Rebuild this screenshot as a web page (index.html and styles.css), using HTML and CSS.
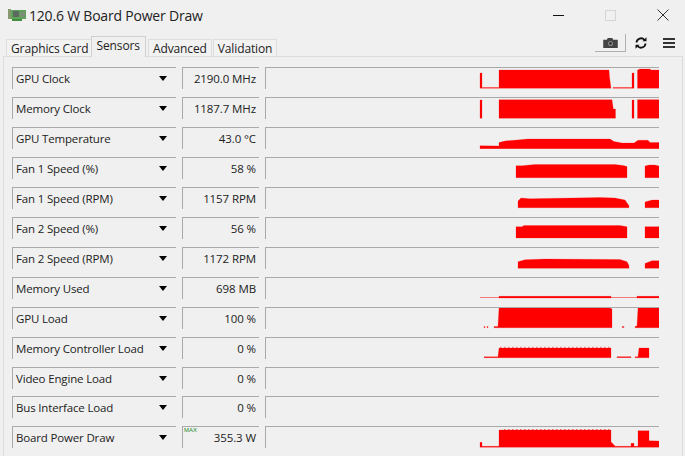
FILE: index.html
```html
<!DOCTYPE html>
<html lang="en">
<head>
<meta charset="utf-8">
<title>120.6 W Board Power Draw</title>
<link rel="stylesheet" href="styles.css">
</head>
<body>
<div class="window">
  <header class="titlebar">
    <svg class="appicon" width="18" height="14" viewBox="0 0 18 14"><rect x="0" y="1" width="3" height="10" fill="#8a9a70"/><rect x="3" y="2" width="15" height="9" fill="#5fa35a"/><rect x="4" y="11" width="10" height="2" fill="#3f8f3f"/><rect x="5" y="3" width="6" height="6" fill="#5b6b60"/><rect x="12" y="4" width="5" height="5" fill="#7b8f78"/></svg>
    <h1 class="title">120.6 W Board Power Draw</h1>
    <div class="caption">
      <span class="cap-min"></span>
      <span class="cap-max"></span>
      <svg class="cap-close" width="12" height="12" viewBox="0 0 12 12"><path d="M.5.5l11 11M11.500.5l-11 11" stroke="#333" stroke-width="1" fill="none"/></svg>
    </div>
  </header>
  <nav class="tabbar">
    <span class="tab">Graphics Card</span>
    <span class="tab active">Sensors</span>
    <span class="tab">Advanced</span>
    <span class="tab">Validation</span>
    <div class="tools">
      <span class="camera"><svg width="15" height="10" viewBox="0 0 16 11"><path d="M0 2h4l1-2h5l1 2h5v9H0z" fill="#444"/><circle cx="8" cy="6" r="2.800" fill="#888"/><circle cx="8" cy="6" r="1.500" fill="#333"/></svg></span>
      <svg class="refresh" width="12" height="12" viewBox="0 0 12 12"><path d="M1.500 5.500A4.500 4.500 0 0 1 9.500 3M10.500 6.500A4.500 4.500 0 0 1 2.500 9" fill="none" stroke="#111" stroke-width="1.800"/><path d="M7.500 4.200h4v-4zM4.500 7.800h-4v4z" fill="#111"/></svg>
      <span class="menu"><i></i><i></i><i></i></span>
    </div>
  </nav>
  <main class="panel">
    <div class="row"><div class="label"><span>GPU Clock</span><b class="arrow"></b></div><div class="value">2190.0 MHz</div>
      <svg class="graph" viewBox="266 1 393 21"><polygon points="480,6 482,6 482,20.500 499,20.500 499,3 609,3 609.500,10 611,21.300 480,21.300"/><polygon points="613,20.500 632,20.500 632,6 634,6 634,21.300 613,21.300"/><polygon points="637.500,3 640,2 650,2 651,3 659,3 659,21.300 637.500,21.300"/></svg></div>
    <div class="row"><div class="label"><span>Memory Clock</span><b class="arrow"></b></div><div class="value">1187.7 MHz</div>
      <svg class="graph" viewBox="266 1 393 21"><polygon points="480,3 482,3 482,21.300 480,21.300"/><polygon points="499,2.700 612,2.700 613.300,12 615.500,12 615.500,21.300 499,21.300"/><polygon points="632,3 634,3 634,21.300 632,21.300"/><polygon points="637.500,2.700 659,2.700 659,21.300 637.500,21.300"/></svg></div>
    <div class="row"><div class="label"><span>GPU Temperature</span><b class="arrow"></b></div><div class="value">43.0 °C</div>
      <svg class="graph" viewBox="266 1 393 21"><polygon points="480,18.700 499,19 499,15.500 505,14 517,13 528,12 610,12 614,14.500 622,16 627,16 634,16 638,13.300 648,13.300 650,15.500 659,15.500 659,21.700 480,21.700"/></svg></div>
    <div class="row"><div class="label"><span>Fan 1 Speed (%)</span><b class="arrow"></b></div><div class="value">58 %</div>
      <svg class="graph" viewBox="266 1 393 21"><polygon points="516,8.700 522,8.700 535,7.500 615,7.500 623,8.500 627,9.500 627,20.700 516,20.700"/><polygon points="645,9 649,8 655,8 659,9 659,20.700 645,20.700"/></svg></div>
    <div class="row"><div class="label"><span>Fan 1 Speed (RPM)</span><b class="arrow"></b></div><div class="value">1157 RPM</div>
      <svg class="graph" viewBox="266 1 393 21"><polygon points="518,14 521,11 530,11.700 600,10.500 615,11 625,13 629,18.700 629,20.700 518,20.700"/><polygon points="645,15 652,13 659,13 659,20.700 645,20.700"/></svg></div>
    <div class="row"><div class="label"><span>Fan 2 Speed (%)</span><b class="arrow"></b></div><div class="value">56 %</div>
      <svg class="graph" viewBox="266 1 393 21"><polygon points="516,9.700 522,9.700 524,8.500 620,8.500 627,9.700 627,21 516,21"/><polygon points="645,9.700 659,9.700 659,21 645,21"/></svg></div>
    <div class="row"><div class="label"><span>Fan 2 Speed (RPM)</span><b class="arrow"></b></div><div class="value">1172 RPM</div>
      <svg class="graph" viewBox="266 1 393 21"><polygon points="518,14.700 525,12.700 545,12 620,12.500 627,14.700 629,18.700 629,21.300 518,21.300"/><polygon points="645,16.500 652,13.700 659,13.700 659,21.300 645,21.300"/></svg></div>
    <div class="row"><div class="label"><span>Memory Used</span><b class="arrow"></b></div><div class="value">698 MB</div>
      <svg class="graph" viewBox="266 1 393 21"><line class="faint" x1="480" y1="20.500" x2="659" y2="20.500"/><rect x="499" y="19.200" width="112" height="1.800"/><rect x="637" y="19.200" width="22" height="1.800"/></svg></div>
    <div class="row"><div class="label"><span>GPU Load</span><b class="arrow"></b></div><div class="value">100 %</div>
      <svg class="graph" viewBox="266 1 393 21"><polygon points="499,1 610,1 612,2 612,20.700 494,20.700 494,19.500 498,19.500"/><rect x="484" y="19.500" width="1" height="1.200"/><rect x="487" y="19.500" width="1" height="1.200"/><rect x="622" y="19.500" width="2" height="1"/><polygon points="638,1 659,1 659,20.700 635,20.700 635,19.500 637,19"/></svg></div>
    <div class="row"><div class="label"><span>Memory Controller Load</span><b class="arrow"></b></div><div class="value">0 %</div>
      <svg class="graph" viewBox="266 1 393 21"><polygon points="484,19.800 498,19.800 499,11 611,11 611,20.700 484,20.700"/><line class="teeth" x1="500" y1="10.300" x2="611" y2="10.300"/><rect x="617" y="19.700" width="14" height="1"/><polygon points="635,19.700 638,19.700 639,11 649,11 649,20.700 635,20.700"/></svg></div>
    <div class="row"><div class="label"><span>Video Engine Load</span><b class="arrow"></b></div><div class="value">0 %</div><svg class="graph" viewBox="266 1 393 21"></svg></div>
    <div class="row"><div class="label"><span>Bus Interface Load</span><b class="arrow"></b></div><div class="value">0 %</div><svg class="graph" viewBox="266 1 393 21"></svg></div>
    <div class="row"><div class="label"><span>Board Power Draw</span><b class="arrow"></b></div><div class="value"><small class="max">MAX</small>355.3 W</div>
      <svg class="graph" viewBox="266 1 393 21"><polygon points="480,16.300 482,16.300 482,20.300 499,20.300 499,4 611,4 611,15.700 614,19 616,20.700 616,21.300 480,21.300"/><line class="teeth" x1="504" y1="3.500" x2="611" y2="3.500"/><polygon points="616,20.300 631,20.300 631,17.300 634,17.300 634,20.300 638,20.300 638,4.700 649,4.700 649,14.700 659,15 659,21.300 616,21.300"/></svg></div>
  </main>
</div>
</body>
</html>
```
FILE: styles.css
```css
* { box-sizing: border-box; }
html, body { margin: 0; padding: 0; }
body {
  width: 685px;
  height: 456px;
  overflow: hidden;
  background: #f0f0f0;
  color: #222;
  font-family: "Open Sans", "Noto Sans", sans-serif;
  font-size: 11.500px;
}
.window { display: flex; flex-direction: column; height: 456px; }

.titlebar { display: flex; align-items: center; height: 31px; padding: 0 16px 0 8px; }
.appicon { margin-right: 3px; }
.title { margin: 0; font-size: 14px; font-weight: 400; letter-spacing: -.2px; color: #222; }
.caption { margin-left: auto; display: flex; align-items: center; }
.cap-min { width: 11px; height: 1px; background: #111; }
.cap-max { width: 11px; height: 11px; margin-left: 41px; border: 1px solid #d6d6d6; }
.cap-close { margin-left: 41px; }

.tabbar { display: flex; align-items: flex-end; height: 26px; padding-left: 6px; }
.tab { height: 17px; padding: 0 4px; margin-right: 1px; line-height: 17px; background: #f2f2f2; border: 1px solid #dedede; border-bottom: 0; font-size: 12px; letter-spacing: -.12px; white-space: nowrap; }
.tab.active { height: 21px; line-height: 18px; margin: 0 2px -1px -4px; position: relative; z-index: 1; background: #f0f0f0; padding: 0 5px; border-color: #d0d0d0; }
.tools { margin-left: 317px; display: flex; align-items: center; align-self: flex-start; margin-top: 4px; }
.camera { display: flex; align-items: center; justify-content: center; width: 31px; height: 18px; border-right: 1px solid #b0b0b0; border-bottom: 1px solid #b0b0b0; }
.refresh { margin-left: 9px; }
.menu { display: flex; flex-direction: column; gap: 2px; width: 12px; margin-left: 16px; }
.menu i { display: block; height: 2px; background: #333; }

.panel { flex: 1; margin: 0 2px 0 3px; padding: 10px 0 0 8px; border: 1px solid #dcdcdc; border-bottom: 0; }
.row { display: grid; grid-template-columns: 164px 77px 394px; column-gap: 6px; height: 30px; }
.row:nth-child(11) { height: 29px; }
.label, .value, .graph { height: 22px; border-top: 1px solid #a9a9a9; border-left: 1px solid #a9a9a9; }
.label { display: flex; align-items: center; justify-content: space-between; padding: 0 9px 0 3px; white-space: nowrap; letter-spacing: -.16px; }
.arrow { width: 0; height: 0; border-left: 4.500px solid transparent; border-right: 4.500px solid transparent; border-top: 5px solid #000; }
.value { position: relative; padding: 0 3px 0 0; display: flex; align-items: center; justify-content: flex-end; white-space: nowrap; letter-spacing: -.1px; }
.max { position: absolute; left: 1px; top: -1px; font-size: 6px; line-height: 8px; color: #1f8a2a; font-family: "Liberation Sans", sans-serif; letter-spacing: 0; }
.graph { display: block; width: 394px; overflow: hidden; }
.graph polygon, .graph rect { fill: #f00; stroke: rgba(255, 0, 0, .35); stroke-width: .6; }
.graph .faint { stroke: rgba(255, 0, 0, .5); stroke-width: 1; }
.graph .teeth { stroke: rgba(255, 0, 0, .55); stroke-width: 1; stroke-dasharray: 1.500 2.500; }
```
